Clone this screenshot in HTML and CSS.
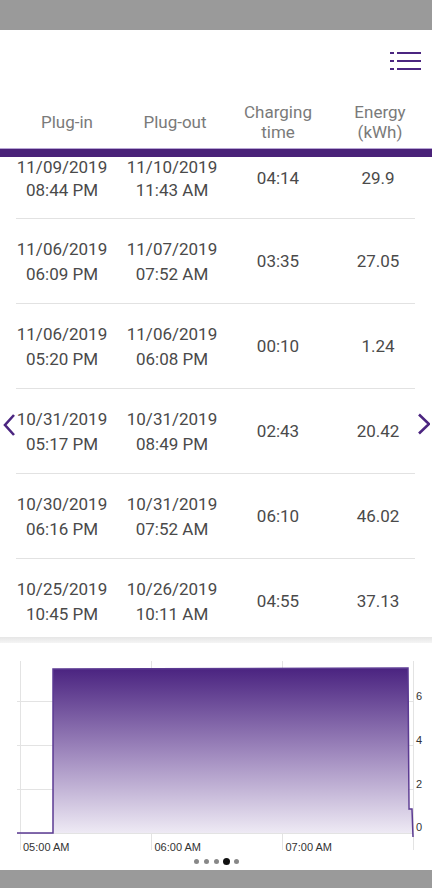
FILE: index.html
```html
<!DOCTYPE html>
<html lang="en">
<head>
<meta charset="utf-8" />
<title>Charging sessions</title>
<meta content="width=device-width, initial-scale=1, shrink-to-fit=no" name="viewport"/>
<link rel="stylesheet" href="styles.css">
</head>
<body>

<div class="statusbar"></div>

<!-- toolbar: -->
<div class="toolbar">
    <svg class="menu-ico" width="31" height="18" viewBox="0 0 31 18">
        <rect x="0" y="0" width="4" height="2"/><rect x="7" y="0" width="24" height="2"/>
        <rect x="0" y="8" width="4" height="2"/><rect x="7" y="8" width="24" height="2"/>
        <rect x="0" y="16" width="4" height="2"/><rect x="7" y="16" width="24" height="2"/>
    </svg>
</div>

<!-- table header: -->
<div class="thead">
    <div class="th th-in">Plug-in</div>
    <div class="th th-out">Plug-out</div>
    <div class="th">Charging<br>time</div>
    <div class="th th-kwh">Energy<br>(kWh)</div>
</div>
<div class="thead-bar"></div>

<!-- sessions: -->
<div class="tbody">
    <div class="rows">
        <div class="row first"><div>11/09/2019<br>08:44 PM</div><div>11/10/2019<br>11:43 AM</div><div>04:14</div><div>29.9</div></div>
        <div class="row"><div>11/06/2019<br>06:09 PM</div><div>11/07/2019<br>07:52 AM</div><div>03:35</div><div>27.05</div></div>
        <div class="row"><div>11/06/2019<br>05:20 PM</div><div>11/06/2019<br>06:08 PM</div><div>00:10</div><div>1.24</div></div>
        <div class="row"><div>10/31/2019<br>05:17 PM</div><div>10/31/2019<br>08:49 PM</div><div>02:43</div><div>20.42</div></div>
        <div class="row"><div>10/30/2019<br>06:16 PM</div><div>10/31/2019<br>07:52 AM</div><div>06:10</div><div>46.02</div></div>
        <div class="row"><div>10/25/2019<br>10:45 PM</div><div>10/26/2019<br>10:11 AM</div><div>04:55</div><div>37.13</div></div>
    </div>
    <svg class="chev chev-left" width="14" height="24" viewBox="0 0 14 24"><polyline points="12,2 3,12 12,22"/></svg>
    <svg class="chev chev-right" width="14" height="24" viewBox="0 0 14 24"><polyline points="3,1.5 13,11 3,20.5"/></svg>
</div>

<!-- chart: -->
<div class="panel">
    <div class="panel-shadow"></div>
    <svg class="chart" width="432" height="212" viewBox="0 0 432 212">
        <defs>
            <linearGradient id="fade" x1="0" y1="0" x2="0" y2="1">
                <stop offset="0" stop-color="#4a2380"/>
                <stop offset="0.5" stop-color="#9d86bc"/>
                <stop offset="1" stop-color="#efebf5"/>
            </linearGradient>
        </defs>
        <g class="grid">
            <line x1="17" y1="58.5" x2="413" y2="58.5"/>
            <line x1="17" y1="102.5" x2="413" y2="102.5"/>
            <line x1="17" y1="146.5" x2="413" y2="146.5"/>
            <line x1="17" y1="190.5" x2="413" y2="190.5"/>
            <line x1="20.5" y1="18" x2="20.5" y2="207"/>
            <line x1="151.5" y1="18" x2="151.5" y2="207"/>
            <line x1="282.5" y1="18" x2="282.5" y2="207"/>
            <line x1="413.5" y1="18" x2="413.5" y2="207"/>
        </g>
        <path class="area" d="M17,190 H53 V26 L408,25 V166 H412 V191 L412,190 Z"/>
        <path class="line" d="M17,190 H53 V26 L408,25 L409,166 H412 L413,194"/>
        <g class="ylab">
            <text x="416" y="57">6</text>
            <text x="416" y="101">4</text>
            <text x="416" y="145">2</text>
            <text x="416" y="188">0</text>
        </g>
        <g class="xlab">
            <text x="23" y="208">05:00 AM</text>
            <text x="154.5" y="208">06:00 AM</text>
            <text x="285.5" y="208">07:00 AM</text>
        </g>
    </svg>
    <div class="dots">
        <span class="dot"></span><span class="dot"></span><span class="dot"></span><span class="dot on"></span><span class="dot"></span>
    </div>
</div>

<div class="navbar"></div>

</body>
</html>
```

FILE: styles.css
```css
body {
    margin: 0;
    width: 432px;
    height: 888px;
    overflow: hidden;
    background: #fff;
    font-family: Roboto, "Noto Sans", sans-serif;
}

.statusbar { height: 30px; background: #9a9a9a; }
.navbar { height: 18px; background: #9a9a9a; }

/* toolbar: */
.toolbar {
    height: 62px;
    display: flex;
    align-items: center;
    justify-content: flex-end;
    padding-right: 11px;
}
.menu-ico { fill: #4b2580; }

/* table: */
.thead, .row {
    display: grid;
    grid-template-columns: 124px 96px 116px 84px;
    text-align: center;
}
.thead {
    height: 56px;
    padding-top: 4px;
    box-sizing: border-box;
    align-items: center;
    color: #7a7a7a;
    font-size: 17px;
    line-height: 20px;
}
.th-in { padding-left: 10px; }
.th-out { padding-left: 6px; }
.th-kwh { padding-left: 4px; }

.thead-bar {
    height: 8px;
    border-top: 1px solid #b7a5d4;
    background: #4a2279;
}

.tbody {
    position: relative;
    height: 480px;
    overflow: hidden;
}
.rows { margin-top: -23px; }
.row {
    height: 85px;
    box-sizing: border-box;
    align-items: center;
    color: #4a4a4a;
    font-size: 17px;
    line-height: 25px;
    background: linear-gradient(#e2e2e2, #e2e2e2) no-repeat 16px 100% / 399px 1px;
}
.row.first {
    padding-top: 4px;
    line-height: 23px;
}

.chev {
    position: absolute;
    top: 256px;
    fill: none;
    stroke: #4b2580;
    stroke-width: 2.6;
}
.chev-left { left: 2px; }
.chev-right { right: 2px; }

/* chart: */
.panel-shadow {
    height: 6px;
    background: linear-gradient(#e6e6e6, #f5f5f5);
}
.chart { display: block; }
.grid line { stroke: #e3e3e3; stroke-width: 1; }
.area { fill: url(#fade); }
.line { fill: none; stroke: #5b3a92; stroke-width: 1.5; }
.ylab text, .xlab text {
    font-family: "Liberation Sans", Arial, sans-serif;
    font-size: 11px;
    fill: #333;
}

.dots {
    height: 15px;
    padding-bottom: 3px;
    box-sizing: border-box;
    display: flex;
    align-items: center;
    justify-content: center;
    gap: 5px;
}
.dot {
    width: 5px;
    height: 5px;
    border-radius: 50%;
    background: #888;
}
.dot.on {
    width: 7px;
    height: 7px;
    background: #111;
    margin: 0 -1px;
}
```
